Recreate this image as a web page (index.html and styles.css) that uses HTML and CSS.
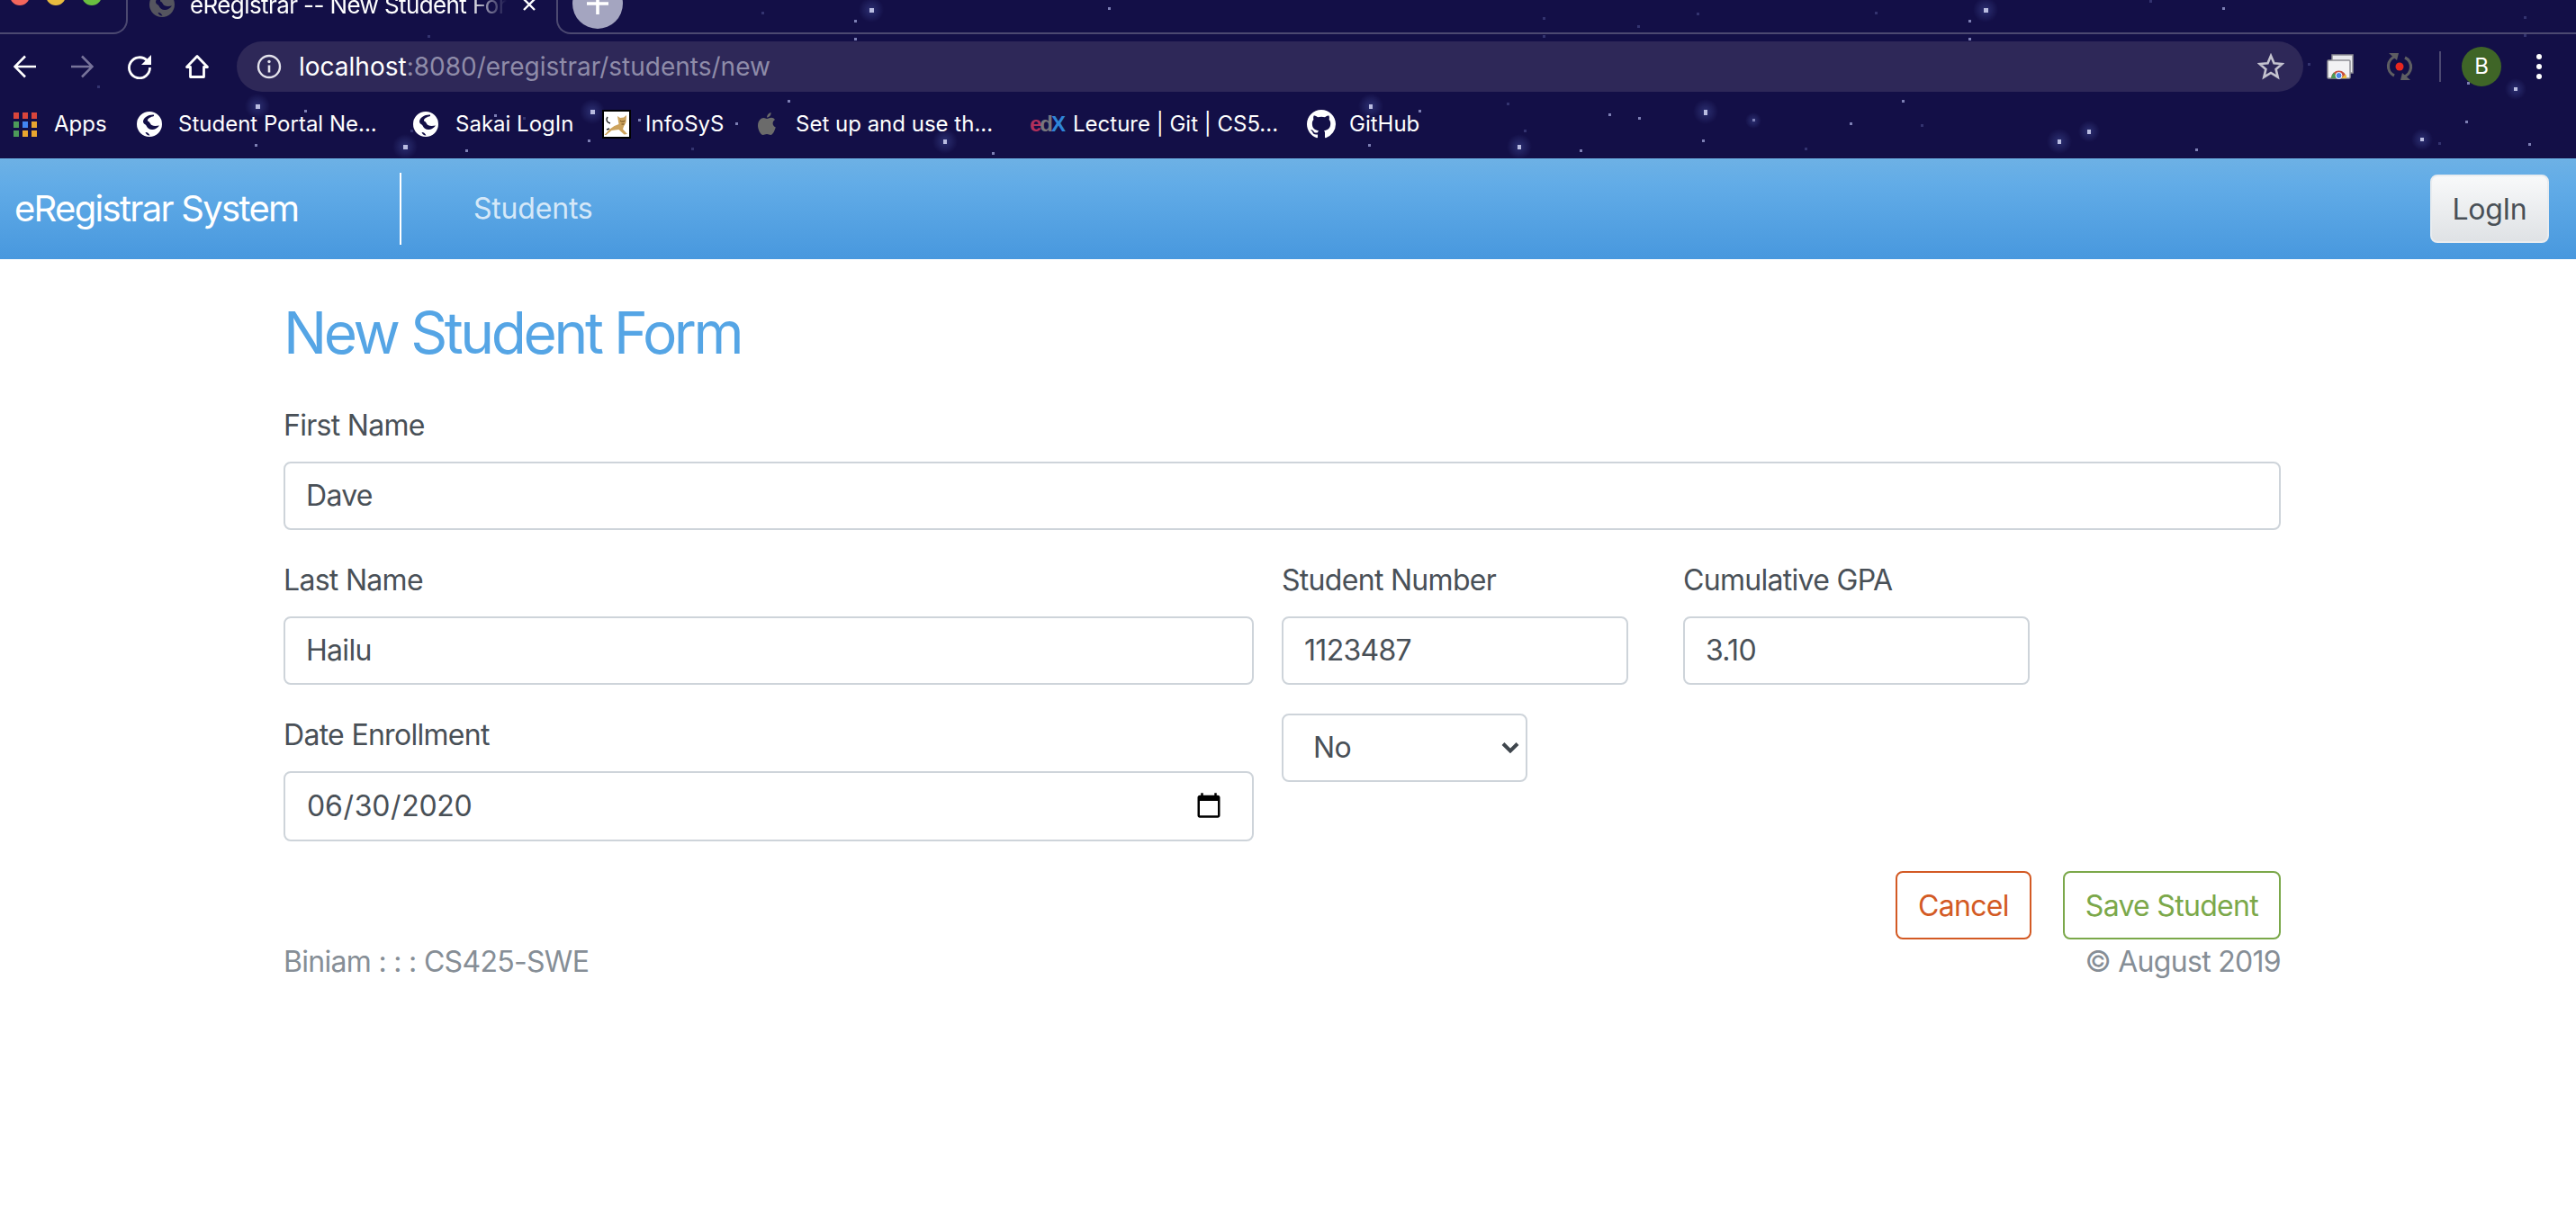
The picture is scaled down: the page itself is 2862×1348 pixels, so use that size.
FILE: index.html
```html
<!DOCTYPE html>
<html lang="en">
<head>
    <meta charset="UTF-8">
    <title>eRegistrar -- New Student Form</title>
    <link rel="stylesheet" href="styles.css">
</head>
<body>
    <div class="browser">
        <svg class="stars" width="2862" height="176" viewBox="0 0 2862 176">
            <defs>
                <radialGradient id="glow">
                    <stop offset="0" stop-color="#5a6cc0" stop-opacity=".35"/>
                    <stop offset="1" stop-color="#5a6cc0" stop-opacity="0"/>
                </radialGradient>
            </defs>
            <g fill="url(#glow)">
                <circle cx="286" cy="118" r="14"/><circle cx="450" cy="163" r="14"/><circle cx="968" cy="11" r="14"/>
                <circle cx="658" cy="124" r="14"/><circle cx="1523" cy="118" r="14"/><circle cx="1050" cy="157" r="14"/>
                <circle cx="1688" cy="163" r="14"/><circle cx="2206" cy="11" r="14"/><circle cx="1895" cy="124" r="14"/>
                <circle cx="2288" cy="157" r="14"/><circle cx="2321" cy="146" r="12"/><circle cx="2691" cy="155" r="12"/>
                <circle cx="2795" cy="99" r="12"/><circle cx="1948" cy="134" r="9"/>
            </g>
            <g fill="#b9bce0">
                <rect x="284" y="116" width="5" height="5"/><rect x="448" y="161" width="5" height="5"/><rect x="966" y="9" width="5" height="5"/>
                <rect x="656" y="122" width="5" height="5"/><rect x="1521" y="116" width="4" height="5"/><rect x="1048" y="155" width="4" height="5"/>
                <rect x="1686" y="161" width="4" height="5"/><rect x="2204" y="9" width="5" height="5"/><rect x="1893" y="122" width="4" height="6"/>
                <rect x="2286" y="155" width="4" height="5"/><rect x="2319" y="144" width="4" height="5"/><rect x="2689" y="153" width="4" height="4"/>
                <rect x="2793" y="97" width="4" height="4"/>
            </g>
            <g fill="#7d7fb4">
                <rect x="338" y="122" width="3" height="3"/><rect x="283" y="160" width="3" height="3"/><rect x="949" y="22" width="3" height="3"/>
                <rect x="949" y="42" width="3" height="3"/><rect x="709" y="132" width="3" height="3"/><rect x="875" y="111" width="3" height="3"/>
                <rect x="817" y="136" width="3" height="3"/><rect x="653" y="155" width="3" height="3"/><rect x="517" y="166" width="3" height="3"/>
                <rect x="549" y="127" width="3" height="3"/><rect x="1231" y="8" width="3" height="3"/><rect x="1576" y="122" width="3" height="3"/>
                <rect x="1102" y="169" width="3" height="3"/><rect x="1520" y="160" width="3" height="3"/><rect x="1787" y="126" width="3" height="3"/>
                <rect x="1820" y="130" width="3" height="3"/><rect x="1947" y="132" width="3" height="3"/><rect x="2113" y="111" width="3" height="3"/>
                <rect x="2055" y="136" width="3" height="3"/><rect x="1891" y="155" width="3" height="3"/><rect x="1755" y="166" width="3" height="3"/>
                <rect x="2187" y="22" width="3" height="3"/><rect x="2187" y="42" width="3" height="3"/><rect x="2469" y="8" width="3" height="3"/>
                <rect x="2439" y="165" width="3" height="3"/><rect x="2739" y="134" width="3" height="3"/><rect x="2809" y="159" width="3" height="3"/>
                <rect x="2741" y="91" width="3" height="3"/>
            </g>
            <g fill="#33336f">
                <rect x="108" y="95" width="3" height="3"/><rect x="475" y="39" width="3" height="3"/><rect x="456" y="144" width="3" height="3"/>
                <rect x="846" y="13" width="3" height="3"/><rect x="768" y="164" width="3" height="3"/><rect x="581" y="130" width="3" height="3"/>
                <rect x="1693" y="144" width="3" height="3"/><rect x="1674" y="114" width="3" height="3"/><rect x="1714" y="19" width="3" height="3"/>
                <rect x="1714" y="39" width="3" height="3"/><rect x="1819" y="28" width="3" height="3"/><rect x="1885" y="14" width="3" height="3"/>
                <rect x="2083" y="13" width="3" height="3"/><rect x="2388" y="0" width="3" height="3"/><rect x="2134" y="138" width="3" height="3"/>
                <rect x="2005" y="164" width="3" height="3"/><rect x="2804" y="18" width="3" height="3"/><rect x="2804" y="38" width="3" height="3"/>
                <rect x="2709" y="158" width="3" height="3"/><rect x="2564" y="70" width="3" height="3"/>
            </g>
        </svg>

        <div class="tabstrip">
            <div class="tab-edge-left">
                <span class="light red"></span>
                <span class="light yellow"></span>
                <span class="light green"></span>
            </div>
            <div class="tab">
                <svg class="favicon" width="28" height="28" viewBox="0 0 28 28"><use href="#globe" fill="#55555f"/></svg>
                <span class="tab-title">eRegistrar -- New Student Form</span>
                <svg class="tab-close" width="16" height="16" viewBox="0 0 16 16"><path d="M2 2l12 12M14 2L2 14" stroke="#fff" stroke-width="2.4"/></svg>
            </div>
            <div class="tab-edge-right">
                <span class="new-tab">
                    <svg width="28" height="28" viewBox="0 0 28 28"><path d="M14 2v24M2 14h24" stroke="#fff" stroke-width="3.6"/></svg>
                </span>
            </div>
        </div>

        <div class="toolbar">
            <svg class="tool" width="26" height="26" viewBox="0 0 26 26"><path d="M25 13H2M13 1.500L1.500 13 13 24.500" fill="none" stroke="#fff" stroke-width="2.6"/></svg>
            <svg class="tool forward" width="26" height="26" viewBox="0 0 26 26"><path d="M1 13h23M13 1.500L24.500 13 13 24.500" fill="none" stroke="#77739a" stroke-width="2.6"/></svg>
            <svg class="tool reload" width="28" height="28" viewBox="0 0 28 28"><path d="M22.500 7.500A11.500 11.500 0 1 0 25.500 15" fill="none" stroke="#fff" stroke-width="2.8"/><path d="M27 1v11H16z" fill="#fff"/></svg>
            <svg class="tool home" width="28" height="28" viewBox="0 0 28 28"><path d="M14 2.500L2.500 14.500H6.500V25.500H21.500V14.500H25.500z" fill="none" stroke="#fff" stroke-width="2.8" stroke-linejoin="round"/></svg>
            <div class="omnibox">
                <svg width="28" height="28" viewBox="0 0 28 28"><circle cx="14" cy="14" r="12" fill="none" stroke="#e4e3ec" stroke-width="2.4"/><path d="M14 12.500v8" stroke="#e4e3ec" stroke-width="2.6"/><circle cx="14" cy="8.500" r="1.700" fill="#e4e3ec"/></svg>
                <span class="url"><span class="url-host">localhost</span>:8080/eregistrar/students/new</span>
                <svg class="bookmark-star" width="30" height="30" viewBox="0 0 30 30"><path d="M15 3l3.500 8.300 9 .7-6.900 5.900 2.100 8.800-7.700-4.700-7.700 4.700 2.100-8.800L2.500 12l9-.7z" fill="none" stroke="#c4c3cf" stroke-width="2.600"/></svg>
            </div>
            <svg class="ext ext-windows" width="30" height="28" viewBox="0 0 30 28">
                <rect x="6" y="1" width="23" height="20" fill="#e9e9ee" stroke="#8d8d94" stroke-width="1.500"/>
                <rect x="1" y="7" width="25" height="20" rx="1" fill="#f2f2f4" stroke="#8d8d94" stroke-width="1.500"/>
                <path d="M5 27a8.500 8.500 0 0 1 17 0z" fill="#c8503f"/>
                <path d="M5 27a8.500 8.500 0 0 1 3-6.500l4 6.500z" fill="#4c9a53"/>
                <path d="M16 27l5-4.500a8.500 8.500 0 0 1 1 4.500z" fill="#eec23c"/>
                <circle cx="13.500" cy="24" r="3.500" fill="#4b86e8" stroke="#fff"/>
            </svg>
            <svg class="ext ext-sync" width="30" height="32" viewBox="0 0 30 32">
                <path d="M11 4.500A11.500 11.500 0 0 0 9 26" fill="none" stroke="#5e5e62" stroke-width="3.200"/>
                <path d="M19 27.500A11.500 11.500 0 0 0 21 6" fill="none" stroke="#5e5e62" stroke-width="3.200"/>
                <path d="M3 1h11l-2 8zM27 31H16l2-8z" fill="#5e5e62"/>
                <circle cx="15" cy="16" r="4.500" fill="#e8261f"/>
            </svg>
            <span class="tool-sep"></span>
            <span class="avatar">B</span>
            <svg class="kebab" width="6" height="28" viewBox="0 0 6 28"><circle cx="3" cy="3" r="3" fill="#fff"/><circle cx="3" cy="14" r="3" fill="#fff"/><circle cx="3" cy="25" r="3" fill="#fff"/></svg>
        </div>

        <div class="bookmarks">
            <a class="bm bm-apps">
                <span class="apps-grid">
                    <i class="a-red"></i><i class="a-red"></i><i class="a-red"></i>
                    <i class="a-green"></i><i class="a-blue"></i><i class="a-amber"></i>
                    <i class="a-green"></i><i class="a-amber"></i><i class="a-amber"></i>
                </span>
                Apps
            </a>
            <a class="bm bm-portal">
                <svg width="28" height="28" viewBox="0 0 28 28"><use href="#globe" fill="#fff"/></svg>
                Student Portal Ne...
            </a>
            <a class="bm bm-sakai">
                <svg width="28" height="28" viewBox="0 0 28 28"><use href="#globe" fill="#fff"/></svg>
                Sakai LogIn
            </a>
            <a class="bm bm-infosys">
                <svg width="32" height="32" viewBox="0 0 32 32">
                    <rect x="1" y="1" width="30" height="30" fill="#fff" stroke="#000" stroke-width="2"/>
                    <path d="M17 7l3 2 4-.5 3-2.500-.5 8-2.500 4.500-1 3 5 5.500-3.500.5-6-5.500-8 1-6 5H2.500l6-6.500 5-3.500 5-2z" fill="#cda35c"/>
                    <path d="M9 15c-4-1-5-4-3-7M8 21l-3 1" fill="none" stroke="#222" stroke-width="1.400"/>
                    <path d="M20 12l1.500 1h2.500l1.500-1M21.500 16h3" fill="none" stroke="#6b4b1c" stroke-width="1"/>
                </svg>
                InfoSyS
            </a>
            <a class="bm bm-apple">
                <svg width="20" height="26" viewBox="0 0 20 26"><path d="M10 7c1.500 0 3-1.200 5-1.200 1.500 0 3 .8 4 2.200-3.500 2-3 7 .8 8.500-1 3-3 8.500-5.500 8.500-1.500 0-2.500-1-4.300-1s-2.800 1-4.300 1C3 25 0 19 0 14.500 0 9 3.500 6 6.500 6 8 6 9 7 10 7zM10 5.500C10 3 12 .5 14.500 0 15 3 12.500 5.500 10 5.500z" fill="#6b6b6b"/></svg>
                Set up and use th...
            </a>
            <a class="bm bm-edx">
                <span class="edx-logo"><span class="edx-e">e</span><span class="edx-d">d</span><span class="edx-x">X</span></span>
                Lecture | Git | CS5...
            </a>
            <a class="bm bm-github">
                <svg width="32" height="32" viewBox="0 0 16 16"><path fill="#fff" d="M8 0C3.580 0 0 3.580 0 8c0 3.540 2.290 6.530 5.470 7.590.4.070.55-.17.55-.38 0-.19-.01-.82-.01-1.490-2.010.37-2.530-.49-2.690-.94-.09-.23-.48-.94-.82-1.130-.28-.15-.68-.52-.01-.53.630-.01 1.080.58 1.230.82.720 1.210 1.870.87 2.330.66.070-.52.280-.87.510-1.070-1.780-.2-3.640-.89-3.640-3.950 0-.87.310-1.590.820-2.150-.08-.2-.36-1.020.08-2.120 0 0 .67-.21 2.200.82.640-.18 1.320-.27 2-.27s1.360.09 2 .27c1.530-1.040 2.200-.82 2.200-.82.44 1.100.16 1.920.08 2.120.51.560.82 1.270.82 2.150 0 3.070-1.870 3.750-3.650 3.950.29.250.54.730.54 1.480 0 1.070-.01 1.930-.01 2.200 0 .21.150.46.55.38A8.013 8.013 0 0 0 16 8c0-4.420-3.580-8-8-8z"/></svg>
                GitHub
            </a>
        </div>

        <svg class="defs-only" width="0" height="0">
            <symbol id="globe" viewBox="0 0 28 28">
                <path fill-rule="evenodd" d="M14 0a14 14 0 1 0 0 28 14 14 0 0 0 0-28zM19 3.500C13 3 7.500 6.500 7 11c0 2.500 2.500 3 3.500 4.500 1 3 4 5 7.500 4.500 3-.5 5-2 7-4.500-3 .5-6 1-8.500-.5-2-1.500-2-4-4.500-4.500-.5-3 3.500-4.500 7-5.500zM9.500 23c2-.5 4 1.500 5 3.500-2.500.3-4-1-5-3.500z"/>
            </symbol>
        </svg>
    </div>

    <nav class="navbar">
        <a class="brand">eRegistrar System</a>
        <a class="nav-link">Students</a>
        <button class="btn-login" type="button">LogIn</button>
    </nav>

    <main class="container">
        <h2 class="page-title">New Student Form</h2>
        <form action="#" method="post">
            <div class="form-group">
                <label for="firstName">First Name</label>
                <input class="form-control" type="text" id="firstName" value="Dave">
            </div>
            <div class="form-row">
                <div class="form-group col-main">
                    <label for="lastName">Last Name</label>
                    <input class="form-control" type="text" id="lastName" value="Hailu">
                </div>
                <div class="form-group col-small">
                    <label for="studentNumber">Student Number</label>
                    <input class="form-control" type="text" id="studentNumber" value="1123487">
                </div>
                <div class="form-group col-small">
                    <label for="gpa">Cumulative GPA</label>
                    <input class="form-control" type="text" id="gpa" value="3.10">
                </div>
            </div>
            <div class="form-row">
                <div class="form-group col-main date-group">
                    <label for="dateEnrollment">Date Enrollment</label>
                    <input class="form-control date-input" type="date" id="dateEnrollment" value="2020-06-30">
                </div>
                <div class="form-group col-select">
                    <select class="form-control select-input" id="international">
                        <option>No</option>
                        <option>Yes</option>
                    </select>
                </div>
            </div>
            <div class="form-actions">
                <button class="btn btn-cancel" type="button">Cancel</button>
                <button class="btn btn-save" type="submit">Save Student</button>
            </div>
        </form>
        <footer class="page-footer">
            <span>Biniam : : : CS425-SWE</span>
            <span>© August 2019</span>
        </footer>
    </main>
</body>
</html>
```

FILE: styles.css
```css
* {
    box-sizing: border-box;
}

body {
    margin: 0;
    background-color: #fff;
    font-family: Inter, "Noto Sans", sans-serif;
    font-size: 32px;
    line-height: 1.5;
    letter-spacing: -0.7px;
    color: #495057;
}

/* browser window chrome */
.browser {
    position: relative;
    height: 176px;
    background-color: #130f47;
    color: #fff;
    letter-spacing: 0;
    overflow: hidden;
}

.stars {
    position: absolute;
    top: 0;
    left: 0;
}

.defs-only {
    position: absolute;
}

.tabstrip {
    position: relative;
    display: flex;
    height: 38px;
}

.tab-edge-left {
    display: flex;
    gap: 18px;
    align-items: flex-end;
    width: 142px;
    height: 38px;
    padding: 0 0 30px 11px;
    border-right: 2px solid #4c4971;
    border-bottom: 2px solid #4c4971;
    border-bottom-right-radius: 16px;
}

.light {
    flex: none;
    width: 22px;
    height: 22px;
    border-radius: 50%;
}

.red {
    background-color: #f4665c;
}

.yellow {
    background-color: #e8bc3f;
}

.green {
    background-color: #6abf40;
}

.tab {
    display: flex;
    align-items: center;
    width: 476px;
    height: 56px;
    margin-top: -23px;
    padding-left: 24px;
}

.tab-title {
    width: 352px;
    margin-left: 17px;
    font-size: 26px;
    letter-spacing: -0.6px;
    white-space: nowrap;
    overflow: hidden;
    -webkit-mask-image: linear-gradient(90deg, #000 88%, transparent 100%);
    mask-image: linear-gradient(90deg, #000 88%, transparent 100%);
}

.tab-close {
    margin-left: 17px;
}

.tab-edge-right {
    flex: 1;
    height: 38px;
    padding-left: 16px;
    border-left: 2px solid #4c4971;
    border-bottom: 2px solid #4c4971;
    border-bottom-left-radius: 16px;
}

.new-tab {
    display: flex;
    align-items: center;
    justify-content: center;
    width: 56px;
    height: 56px;
    margin-top: -24px;
    border-radius: 50%;
    background-color: #a4a5c0;
}

.toolbar {
    position: relative;
    display: flex;
    align-items: center;
    height: 56px;
    margin-top: 8px;
    padding-left: 15px;
}

.forward {
    margin-left: 37px;
}

.reload {
    margin-left: 37px;
}

.home {
    margin-left: 36px;
}

.omnibox {
    display: flex;
    align-items: center;
    width: 2296px;
    height: 56px;
    margin-left: 30px;
    padding: 0 21px 0 22px;
    border-radius: 28px;
    background-color: #2e2858;
}

.url {
    flex: 1;
    margin-left: 19px;
    font-size: 28px;
    color: #8f8ca9;
}

.url-host {
    color: #fff;
}

.ext-windows {
    margin-left: 26px;
}

.ext-sync {
    margin-left: 36px;
}

.tool-sep {
    width: 2px;
    height: 34px;
    margin-left: 29px;
    background-color: #4c4971;
}

.avatar {
    display: flex;
    align-items: center;
    justify-content: center;
    width: 44px;
    height: 44px;
    margin-left: 23px;
    border-radius: 50%;
    background-color: #3f6527;
    font-size: 24px;
}

.kebab {
    margin-left: 39px;
}

.bookmarks {
    position: relative;
    display: flex;
    align-items: center;
    height: 56px;
    margin-top: 8px;
    padding-left: 15px;
    font-size: 24px;
    white-space: nowrap;
}

.bm {
    display: flex;
    flex: none;
    align-items: center;
    gap: 19px;
}

.apps-grid {
    display: grid;
    grid-template-columns: repeat(3, 6px);
    grid-auto-rows: 7px;
    gap: 3px 4px;
    width: 26px;
}

.a-red {
    background-color: #d9453b;
}

.a-green {
    background-color: #4d9a5a;
}

.a-blue {
    background-color: #4285f4;
}

.a-amber {
    background-color: #e9a52f;
}

.bm-apps {
    width: 137px;
}

.bm-portal {
    width: 307px;
    gap: 18px;
}

.bm-sakai {
    width: 210px;
}

.bm-infosys {
    width: 173px;
    gap: 16px;
}

.bm-apple {
    width: 302px;
    gap: 22px;
}

.bm-edx {
    width: 308px;
    gap: 16px;
}

.bm-github {
    gap: 15px;
}

.edx-logo {
    width: 32px;
    font-family: "Liberation Sans", sans-serif;
    font-size: 24px;
    font-weight: 700;
    letter-spacing: -2px;
}

.edx-e {
    color: #b22f5b;
}

.edx-d {
    color: #77777d;
}

.edx-x {
    color: #2f85d8;
}

/* navbar */
.navbar {
    display: flex;
    align-items: center;
    height: 112px;
    padding: 0 30px 0 16px;
    background: linear-gradient(180deg, #6db1e5 0%, #62ace7 25%, #4898de 100%);
}

.brand {
    display: flex;
    align-items: center;
    width: 430px;
    height: 80px;
    border-right: 2px solid #fff;
    font-size: 40px;
    letter-spacing: -1.7px;
    color: #fff;
}

.nav-link {
    margin-left: 80px;
    letter-spacing: -0.2px;
    color: #d5e8f8;
}

.btn-login {
    width: 132px;
    height: 76px;
    margin-left: auto;
    border: 2px solid #e9ecef;
    border-radius: 8px;
    background: linear-gradient(180deg, #f8f9fa, #dfe2e5);
    font-family: inherit;
    font-size: 32px;
    letter-spacing: -0.3px;
    color: #495057;
}

/* page */
.container {
    width: 2219px;
    margin-left: 315px;
}

.page-title {
    margin: 44px 0 40px;
    font-size: 64px;
    font-weight: 400;
    line-height: 1.2;
    letter-spacing: -3.4px;
    color: #55a5e5;
}

label {
    display: block;
    margin-bottom: 16px;
}

.form-group {
    margin-bottom: 32px;
}

.form-row {
    display: flex;
    gap: 31px;
}

.col-main {
    width: 1078px;
}

.col-small {
    width: 385px;
}

.col-small + .col-small {
    margin-left: 30px;
}

.form-control {
    display: block;
    width: 100%;
    height: 76px;
    padding: 12px 23px;
    border: 2px solid #ced4da;
    border-radius: 8px;
    background-color: #fff;
    font-family: inherit;
    font-size: 32px;
    letter-spacing: -0.7px;
    color: #495057;
}

.date-group {
    margin-bottom: 33px;
}

.date-input {
    height: 78px;
    padding-right: 30px;
    letter-spacing: -0.3px;
}

.col-select {
    width: 273px;
}

.select-input {
    padding-left: 33px;
    appearance: none;
    background: #fff url("data:image/svg+xml,%3Csvg xmlns='http://www.w3.org/2000/svg' width='20' height='14' viewBox='0 0 20 14'%3E%3Cpath d='M2 2.500l8 8 8-8' fill='none' stroke='%233f464d' stroke-width='4'/%3E%3C/svg%3E") no-repeat right 7px center;
}

.form-actions {
    display: flex;
    justify-content: flex-end;
    gap: 35px;
}

.btn {
    height: 76px;
    padding: 2px 23px 0;
    border: 2px solid;
    border-radius: 8px;
    background: #fff;
    font-family: inherit;
    font-size: 32px;
    letter-spacing: -0.7px;
}

.btn-cancel {
    border-color: #d35a24;
    color: #d35a24;
}

.btn-save {
    border-color: #7ba84a;
    color: #7ba84a;
}

.page-footer {
    display: flex;
    justify-content: space-between;
    padding-top: 1px;
    color: #868e96;
}
```
